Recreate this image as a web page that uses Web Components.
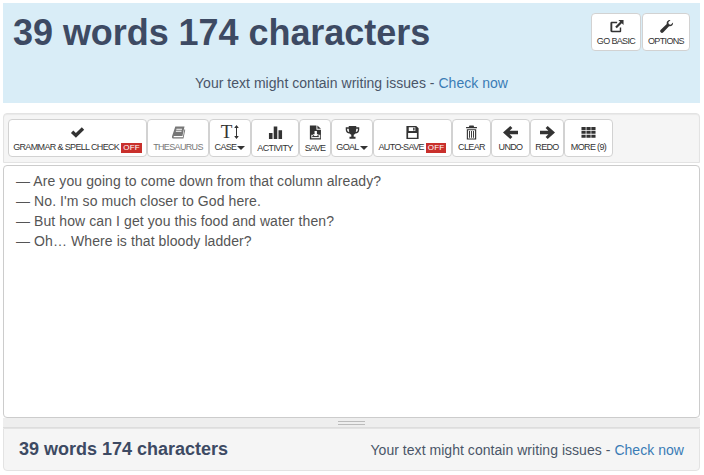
<!DOCTYPE html>
<html>
<head>
<meta charset="utf-8">
<title>Word counter</title>
<style>
    html, body { margin: 0; background: #fff; }
    body { font-family: "Liberation Sans", Arial, sans-serif; color: #444; }
</style>
</head>
<body>
<word-app>
    <word-header></word-header>
    <tool-bar>
        <tool-button label="GRAMMAR &amp; SPELL CHECK" icon="check" off w="139"></tool-button>
        <tool-button label="THESAURUS" icon="book" muted w="62"></tool-button>
        <tool-button label="CASE" icon="case" caret w="42"></tool-button>
        <tool-button label="ACTIVITY" icon="stats" low w="48"></tool-button>
        <tool-button label="SAVE" icon="savefile" low w="32"></tool-button>
        <tool-button label="GOAL" icon="trophy" caret w="42"></tool-button>
        <tool-button label="AUTO-SAVE" icon="floppy" off w="79"></tool-button>
        <tool-button label="CLEAR" icon="trash" w="39"></tool-button>
        <tool-button label="UNDO" icon="left" w="39"></tool-button>
        <tool-button label="REDO" icon="right" w="34"></tool-button>
        <tool-button label="MORE (9)" icon="th" w="49"></tool-button>
    </tool-bar>
    <text-editor>
        <div>— Are you going to come down from that column already?</div>
        <div>— No. I'm so much closer to God here.</div>
        <div>— But how can I get you this food and water then?</div>
        <div>— Oh… Where is that bloody ladder?</div>
    </text-editor>
    <word-footer></word-footer>
</word-app>

<script>
// icons, drawn on a 16x16 box
const ICONS = {
    check: '<path d="M1 8.400 3.500 5.900 6.300 8.600 12.600 2.500 15.100 5 6.300 13.500z"/>',
    book: '<path d="M4.600 1.500h9.800L12.200 11.600H3.400c-.9 0-.9 1.500 0 1.500h9.200l1.700-8.600.9.600-1.900 9.400H3c-1.600 0-2.200-1.200-1.900-2.600z"/><path fill="#fff" d="M5.800 4h6l-.2 1H5.600zM5.300 6.200h6l-.2 1H5.100z"/>',
    stats: '<path d="M1 8.500h3.800v6.500H1zM6.100 1.500h3.800V15H6.100zM11.200 5.500H15V15h-3.800z"/>',
    savefile: '<path d="M2 .5h7v4.500h4.800v10.500H2z"/><path d="M10 .5 13.800 4H10z"/><path fill="#fff" d="M7 6.500h2.500v3.300h2L8.200 13 5 9.800h2z"/><path fill="#fff" d="M3.500 10.500h1.200L6.500 12.500H10l1.800-2H13v3.500H3.500z" opacity=".9"/><path d="M4.500 11.800h7v1h-7z"/>',
    trophy: '<path d="M4 1h8v1.500h3.200V5c0 2.400-1.700 3.800-4.100 4.100-.5.7-1.100 1.200-1.800 1.400v2h1.900v2.200H4.800v-2.200h1.900v-2c-.7-.2-1.300-.7-1.800-1.400C2.500 8.800.8 7.400.8 5V2.500H4zM2.300 4v1c0 1.200.8 2 2.200 2.400C4.200 6.400 4 5.200 4 4zM12 4c0 1.200-.2 2.400-.5 3.400 1.400-.4 2.200-1.200 2.200-2.400V4z"/>',
    floppy: '<path fill-rule="evenodd" d="M1.500 1h10.500l2.500 2.500V15h-13zM4 2.300v4.200h7V2.300zM8.700 3h1.500v2.800H8.700zM3.300 8.500v5.200h9.400V8.500z"/>',
    trash: '<path fill-rule="evenodd" d="M5.800 .5h4.400l.6 1.500h3v1.400H2.200V2h3zM3 4.500h10V15.500H3zM4.200 5.700v8.600h7.600V5.700z"/><path d="M5.400 6.500h1v7h-1zM7.500 6.500h1v7h-1zM9.600 6.500h1v7h-1z"/>',
    left: '<path d="M7.800 1 10 3.200 7.100 6.100H16v3.800H7.100l2.900 2.900L7.800 15 0 8z"/>',
    right: '<path d="M8.200 1 6 3.200 8.900 6.100H0v3.800h8.900L6 12.800 8.200 15 16 8z"/>',
    th: '<path d="M.5 2h4.500v3.200H.5zM5.800 2h4.500v3.200H5.800zM11 2h4.500v3.200H11zM.5 6.200h4.500v3.200H.5zM5.800 6.200h4.500v3.200H5.800zM11 6.200h4.500v3.200H11zM.5 10.400h4.500v3.200H.5zM5.800 10.400h4.500v3.200H5.800zM11 10.400h4.500v3.200H11z"/>',
    external: '<path d="M2.500 3h6.200v1.500H3.500v8h8V9H13v4a1 1 0 0 1-1 1H3a1.500 1.500 0 0 1-1.500-1.500V4.500A1.500 1.500 0 0 1 2.500 3z"/><path d="M10 1h5.500v5.500L13.600 4.600 8.300 9.900 6.600 8.200l5.300-5.300z"/>',
    wrench: '<path d="M15 3.700c.4 2.500-1.800 4.600-4.300 4L4.600 14.200c-.8.800-2.100.8-2.800 0-.8-.8-.7-2 .1-2.800L8.300 5.300C7.700 2.800 9.800.6 12.300 1L9.900 3.400 10.500 5.500 12.600 6.100z"/>'
};

function iconSvg(name, size) {
    return `<svg width="${size}" height="${size}" viewBox="0 0 16 16" fill="currentColor" aria-hidden="true">${ICONS[name]}</svg>`;
}

class WordApp extends HTMLElement {
    constructor() {
        super();
        this.attachShadow({ mode: 'open' }).innerHTML = `
            <style>
                :host { display: flex; flex-direction: column; width: 697px; padding: 3px 0 0 3px; }
            </style>
            <slot></slot>
        `;
    }
}

class WordHeader extends HTMLElement {
    constructor() {
        super();
        this.attachShadow({ mode: 'open' }).innerHTML = `
            <style>
                :host { display: block; height: 100px; background: #d9edf7; margin-bottom: 10px; }
                .top { display: flex; justify-content: space-between; height: 70px; padding: 10px 10px 0 10px; box-sizing: border-box; }
                h1 { margin: 0; font-size: 36px; line-height: 40px; font-weight: bold; color: #3d4a63; letter-spacing: -.05px; }
                .btns { display: flex; gap: 1px; height: 38px; }
                .note { text-align: center; font-size: 14px; line-height: 20px; color: #4a5568; letter-spacing: .03px; }
                a { color: #3a7cb5; text-decoration: none; }
            </style>
            <div class="top">
                <h1>39 words 174 characters</h1>
                <div class="btns">
                    <tool-button label="GO BASIC" icon="external" w="50" h="38"></tool-button>
                    <tool-button label="OPTIONS" icon="wrench" w="48" h="38"></tool-button>
                </div>
            </div>
            <div class="note">Your text might contain writing issues - <a href="#">Check now</a></div>
        `;
    }
}

class ToolBar extends HTMLElement {
    constructor() {
        super();
        this.attachShadow({ mode: 'open' }).innerHTML = `
            <style>
                :host {
                    display: flex; height: 50px; box-sizing: border-box;
                    padding: 5px 4px; background: #f5f5f5;
                    border: 1px solid #e3e3e3; border-radius: 4px 4px 0 0;
                    box-shadow: inset 0 1px 1px rgba(0,0,0,.05);
                }
            </style>
            <slot></slot>
        `;
    }
}

class ToolButton extends HTMLElement {
    constructor() {
        super();
        this._shadow = this.attachShadow({ mode: 'open' });
    }

    connectedCallback() {
        const label = this.getAttribute('label');
        const icon = this.getAttribute('icon');
        const w = this.getAttribute('w');
        const h = this.getAttribute('h') || 38;
        const muted = this.hasAttribute('muted');
        const low = this.hasAttribute('low');
        const glyph = icon === 'case'
            ? '<span class="tt">T<svg width="5" height="14" viewBox="0 0 5 14" fill="currentColor"><path d="M2.500 0 4.800 3H3v8h1.800L2.500 14 .2 11H2V3H.2z"/></svg></span>'
            : iconSvg(icon, 15);
        this._shadow.innerHTML = `
            <style>
                :host {
                    display: flex; flex-direction: column; align-items: center;
                    box-sizing: border-box; width: ${w}px; height: ${h}px;
                    background: #fff; border: 1px solid #d2d2d2; border-radius: 4px;
                    color: ${muted ? '#777' : '#333'};
                    padding-top: 4px;
                    font-family: "Liberation Sans", Arial, sans-serif;
                }
                .ic { height: 16px; display: flex; align-items: center; justify-content: center; }
                svg { display: block; }
                .tt { display: flex; align-items: center; gap: 2px; font-family: "Liberation Serif", serif; font-size: 19px; line-height: 16px; color: #333; }
                .lb {
                    font-size: 9px; letter-spacing: -.65px; line-height: 11px; margin-top: ${low ? 3 : 2}px;
                    white-space: nowrap; display: flex; align-items: center;
                }
                .off { background: #c9302c; color: #fff; padding: 0 2px; margin-left: 2px; height: 10px; font-size: 8px; line-height: 10px; letter-spacing: .2px; }
                .caret { width: 0; height: 0; margin-left: 1px; border: 4px solid transparent; border-top: 4px solid #333; border-bottom: 0; }
            </style>
            <div class="ic">${glyph}</div>
            <div class="lb"><span>${label}</span>${this.hasAttribute('off') ? '<span class="off">OFF</span>' : ''}${this.hasAttribute('caret') ? '<span class="caret"></span>' : ''}</div>
        `;
    }
}

class TextEditor extends HTMLElement {
    constructor() {
        super();
        this.attachShadow({ mode: 'open' }).innerHTML = `
            <style>
                :host {
                    display: block; box-sizing: border-box; height: 253px; margin-top: 2px;
                    padding: 5px 12px; background: #fff; border: 1px solid #ccc; border-radius: 4px;
                    font-size: 14px; line-height: 20px; color: #555; letter-spacing: .09px;
                }
            </style>
            <slot></slot>
        `;
    }
}

class WordFooter extends HTMLElement {
    constructor() {
        super();
        this.attachShadow({ mode: 'open' }).innerHTML = `
            <style>
                .grip { height: 10px; background: #eee; display: flex; align-items: center; justify-content: center; border-bottom: 1px solid #ddd; box-sizing: border-box; }
                .grip span { width: 27px; height: 1px; border-top: 1px solid #bbb; border-bottom: 1px solid #bbb; padding-bottom: 1px; }
                .bar {
                    display: flex; justify-content: space-between; align-items: center;
                    box-sizing: border-box; height: 43px; padding: 0 15px 0 15px; background: #f5f5f5;
                    border: 1px solid #e3e3e3; border-radius: 0 0 4px 4px;
                    color: #4a5568; font-size: 14px;
                }
                b { font-size: 18px; color: #3d4a63; }
                .msg { letter-spacing: .04px; }
                a { color: #3a7cb5; text-decoration: none; }
            </style>
            <div class="grip"><span></span></div>
            <div class="bar">
                <b>39 words 174 characters</b>
                <span class="msg">Your text might contain writing issues - <a href="#">Check now</a></span>
            </div>
        `;
    }
}

customElements.define('word-app', WordApp);
customElements.define('word-header', WordHeader);
customElements.define('tool-bar', ToolBar);
customElements.define('tool-button', ToolButton);
customElements.define('text-editor', TextEditor);
customElements.define('word-footer', WordFooter);
</script>
</body>
</html>
